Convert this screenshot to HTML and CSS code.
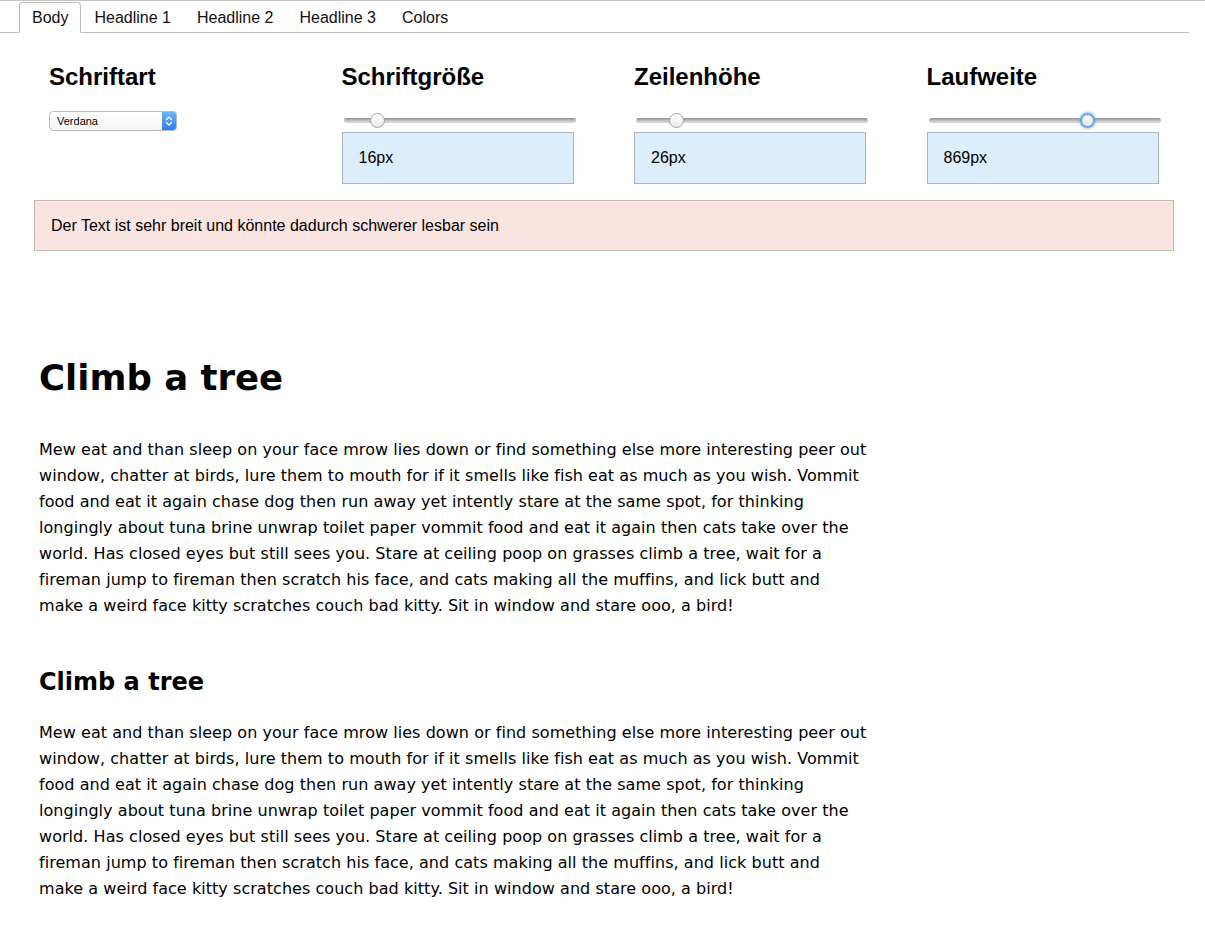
FILE: index.html
```html
<!DOCTYPE html>
<html lang="de">
<head>
<meta charset="utf-8">
<title>Typo Tester</title>
<link rel="stylesheet" href="styles.css">
</head>
<body>
<div class="page">
  <ul class="tabs">
    <li class="tab active">Body</li>
    <li class="tab">Headline 1</li>
    <li class="tab">Headline 2</li>
    <li class="tab">Headline 3</li>
    <li class="tab">Colors</li>
  </ul>

  <div class="controls">
    <div class="col">
      <h3 class="ctl-title">Schriftart</h3>
      <div class="select">
        <span class="select-text">Verdana</span>
        <span class="select-arrow">
          <svg width="14" height="18" viewBox="0 0 14 18"><path d="M4.5 7.5 L7 5 L9.5 7.5 M4.5 10.5 L7 13 L9.5 10.5" fill="none" stroke="#fff" stroke-width="1.3" stroke-linecap="round" stroke-linejoin="round"/></svg>
        </span>
      </div>
    </div>
    <div class="col">
      <h3 class="ctl-title">Schriftgröße</h3>
      <input class="range" type="range" min="0" max="1000" value="122">
      <div class="value-box">16px</div>
    </div>
    <div class="col">
      <h3 class="ctl-title">Zeilenhöhe</h3>
      <input class="range" type="range" min="0" max="1000" value="154">
      <div class="value-box">26px</div>
    </div>
    <div class="col">
      <h3 class="ctl-title">Laufweite</h3>
      <input class="range range-focus" type="range" min="0" max="1000" value="698">
      <div class="value-box">869px</div>
    </div>
  </div>

  <div class="alert">Der Text ist sehr breit und könnte dadurch schwerer lesbar sein</div>

  <div class="preview">
    <h1 class="pv-h1">Climb a tree</h1>
    <p class="pv-text">Mew eat and than sleep on your face mrow lies down or find something else more interesting peer out window, chatter at birds, lure them to mouth for if it smells like fish eat as much as you wish. Vommit food and eat it again chase dog then run away yet intently stare at the same spot, for thinking longingly about tuna brine unwrap toilet paper vommit food and eat it again then cats take over the world. Has closed eyes but still sees you. Stare at ceiling poop on grasses climb a tree, wait for a fireman jump to fireman then scratch his face, and cats making all the muffins, and lick butt and make a weird face kitty scratches couch bad kitty. Sit in window and stare ooo, a bird!</p>
    <h2 class="pv-h2">Climb a tree</h2>
    <p class="pv-text pv-text2">Mew eat and than sleep on your face mrow lies down or find something else more interesting peer out window, chatter at birds, lure them to mouth for if it smells like fish eat as much as you wish. Vommit food and eat it again chase dog then run away yet intently stare at the same spot, for thinking longingly about tuna brine unwrap toilet paper vommit food and eat it again then cats take over the world. Has closed eyes but still sees you. Stare at ceiling poop on grasses climb a tree, wait for a fireman jump to fireman then scratch his face, and cats making all the muffins, and lick butt and make a weird face kitty scratches couch bad kitty. Sit in window and stare ooo, a bird!</p>
  </div>
</div>
</body>
</html>
```

FILE: styles.css
```css
html, body {
  margin: 0;
  padding: 0;
  background: #fff;
}

.page {
  border-top: 1px solid #c4c4c4;
  font-family: "Liberation Sans", Arial, sans-serif;
  color: #000;
}

.tabs {
  list-style: none;
  margin: 0 16px 0 0;
  padding: 1px 0 0 19px;
  display: flex;
  align-items: flex-end;
  border-bottom: 1px solid #bdbdbd;
}

.tab {
  font-size: 16px;
  line-height: 29px;
  padding: 0 12px;
  border: 1px solid transparent;
  margin-bottom: -1px;
  border-radius: 4px 4px 0 0;
  color: #111;
}

.tab.active {
  border-color: #bdbdbd;
  border-bottom-color: #fff;
  background: #fff;
}

.controls {
  display: grid;
  grid-template-columns: repeat(4, 292.5px);
  padding-left: 34px;
}

.col {
  padding: 0 15px;
}

.ctl-title {
  margin: 31px 0 21px;
  font-size: 24px;
  line-height: 26px;
  font-weight: bold;
}

.select {
  width: 128px;
  height: 20px;
  box-sizing: border-box;
  border: 1px solid #bcbcbc;
  border-radius: 4px;
  display: flex;
  background: linear-gradient(#ffffff, #f6f6f6);
  overflow: hidden;
}

.select-text {
  flex: 1;
  font-size: 11px;
  line-height: 18px;
  padding-left: 7px;
}

.select-arrow {
  width: 14px;
  height: 18px;
  background: linear-gradient(#6fb4fb, #2b7cf1);
  display: flex;
}

.range {
  -webkit-appearance: none;
  appearance: none;
  display: block;
  width: 232px;
  height: 18px;
  margin: 0 0 3px 2px;
  padding: 0;
  background: transparent;
}

.range::-webkit-slider-runnable-track {
  height: 5px;
  border-radius: 3px;
  background: linear-gradient(#8f8f8f, #c9c9c9 60%, #d8d8d8);
}

.range::-webkit-slider-thumb {
  -webkit-appearance: none;
  appearance: none;
  width: 15px;
  height: 15px;
  margin-top: -5px;
  border-radius: 50%;
  box-sizing: border-box;
  border: 1px solid #a3a3a3;
  background: linear-gradient(#ffffff, #e9e9e9);
}

.range-focus::-webkit-slider-thumb {
  border: 2px solid #67a3ee;
  box-shadow: 0 0 2px 1px rgba(120, 170, 240, 0.7);
  background: linear-gradient(#ffffff, #e4e4e4);
}

.value-box {
  width: 232px;
  height: 52px;
  box-sizing: border-box;
  border: 1px solid #a9b7c5;
  background: #dcedfb;
  font-size: 16px;
  line-height: 50px;
  padding-left: 16px;
}

.alert {
  margin: 16px 0 0 34px;
  width: 1140px;
  box-sizing: border-box;
  border: 1px solid #cbb6b2;
  background: #fae4e0;
  padding: 16px;
  font-size: 16px;
  line-height: 17px;
}

.preview {
  padding-left: 39px;
  font-family: "DejaVu Sans", Verdana, sans-serif;
}

.pv-h1 {
  margin: 105px 0 0;
  font-size: 35.5px;
  line-height: 44px;
  font-weight: bold;
}

.pv-text {
  margin: 37px 0 0;
  max-width: 830px;
  font-size: 16px;
  line-height: 26px;
  letter-spacing: 0.05px;
}

.pv-h2 {
  margin: 48px 0 0;
  font-size: 24px;
  line-height: 30px;
  font-weight: bold;
}

.pv-text2 {
  margin-top: 23px;
}
```
